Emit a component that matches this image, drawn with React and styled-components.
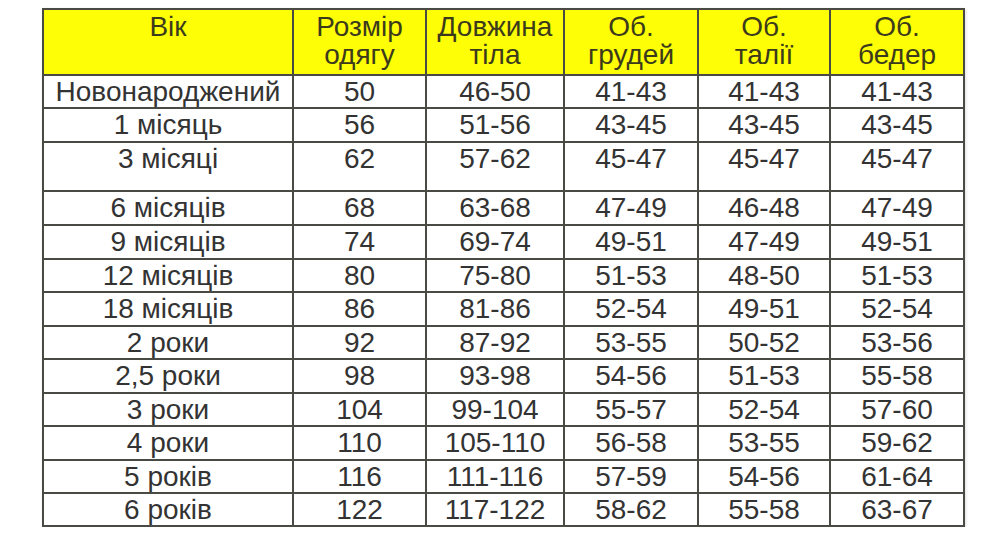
import React from "react";
import styled, { createGlobalStyle } from "styled-components";

const GlobalStyle = createGlobalStyle`
  html, body {
    margin: 0;
    padding: 0;
    background: #ffffff;
  }
  body {
    font-family: "Liberation Sans", Arial, sans-serif;
  }
`;

const columns = [250, 133, 138, 134, 132, 134];

const headers = [
  ["Вік"],
  ["Розмір", "одягу"],
  ["Довжина", "тіла"],
  ["Об.", "грудей"],
  ["Об.", "талії"],
  ["Об.", "бедер"],
];

// h = row height in px (the "3 місяці" row is taller in the original chart)
const rows = [
  { h: 33, cells: ["Новонароджений", "50", "46-50", "41-43", "41-43", "41-43"] },
  { h: 34, cells: ["1 місяць", "56", "51-56", "43-45", "43-45", "43-45"] },
  { h: 49, cells: ["3 місяці", "62", "57-62", "45-47", "45-47", "45-47"] },
  { h: 34, cells: ["6 місяців", "68", "63-68", "47-49", "46-48", "47-49"] },
  { h: 34, cells: ["9 місяців", "74", "69-74", "49-51", "47-49", "49-51"] },
  { h: 33, cells: ["12 місяців", "80", "75-80", "51-53", "48-50", "51-53"] },
  { h: 34, cells: ["18 місяців", "86", "81-86", "52-54", "49-51", "52-54"] },
  { h: 33, cells: ["2 роки", "92", "87-92", "53-55", "50-52", "53-56"] },
  { h: 34, cells: ["2,5 роки", "98", "93-98", "54-56", "51-53", "55-58"] },
  { h: 33, cells: ["3 роки", "104", "99-104", "55-57", "52-54", "57-60"] },
  { h: 34, cells: ["4 роки", "110", "105-110", "56-58", "53-55", "59-62"] },
  { h: 33, cells: ["5 років", "116", "111-116", "57-59", "54-56", "61-64"] },
  { h: 33, cells: ["6 років", "122", "117-122", "58-62", "55-58", "63-67"] },
];

const Page = styled.div`
  padding: 8px 0 0 42px;
`;

const Table = styled.table`
  border-collapse: collapse;
  table-layout: fixed;
  width: 922px;
  box-shadow: 1px 1px 3px rgba(0, 0, 0, 0.12);
`;

const HeadRow = styled.tr`
  height: 66px;
  background: #fefe06;
`;

const Row = styled.tr`
  height: ${(p) => p.$h}px;
`;

const HeadCell = styled.th`
  border: 2px solid #4a4a44;
  padding: 3px 0 0;
  vertical-align: top;
  text-align: center;
  font-weight: normal;
  font-size: 28px;
  line-height: 28px;
  color: #3c3a1c;
`;

const Cell = styled.td`
  border: 2px solid #4a4a44;
  padding: 1px 0 0;
  vertical-align: top;
  text-align: center;
  font-size: 28px;
  line-height: 30px;
  color: #333333;
  white-space: nowrap;
`;

export default function App() {
  return (
    <>
      <GlobalStyle />
      <Page>
        <Table>
          <colgroup>
            {columns.map((w, i) => (
              <col key={i} style={{ width: w }} />
            ))}
          </colgroup>
          <thead>
            <HeadRow>
              {headers.map((lines, i) => (
                <HeadCell key={i}>
                  {lines.map((l, j) => (
                    <div key={j}>{l}</div>
                  ))}
                </HeadCell>
              ))}
            </HeadRow>
          </thead>
          <tbody>
            {rows.map((r, i) => (
              <Row key={i} $h={r.h}>
                {r.cells.map((c, j) => (
                  <Cell key={j}>{c}</Cell>
                ))}
              </Row>
            ))}
          </tbody>
        </Table>
      </Page>
    </>
  );
}
